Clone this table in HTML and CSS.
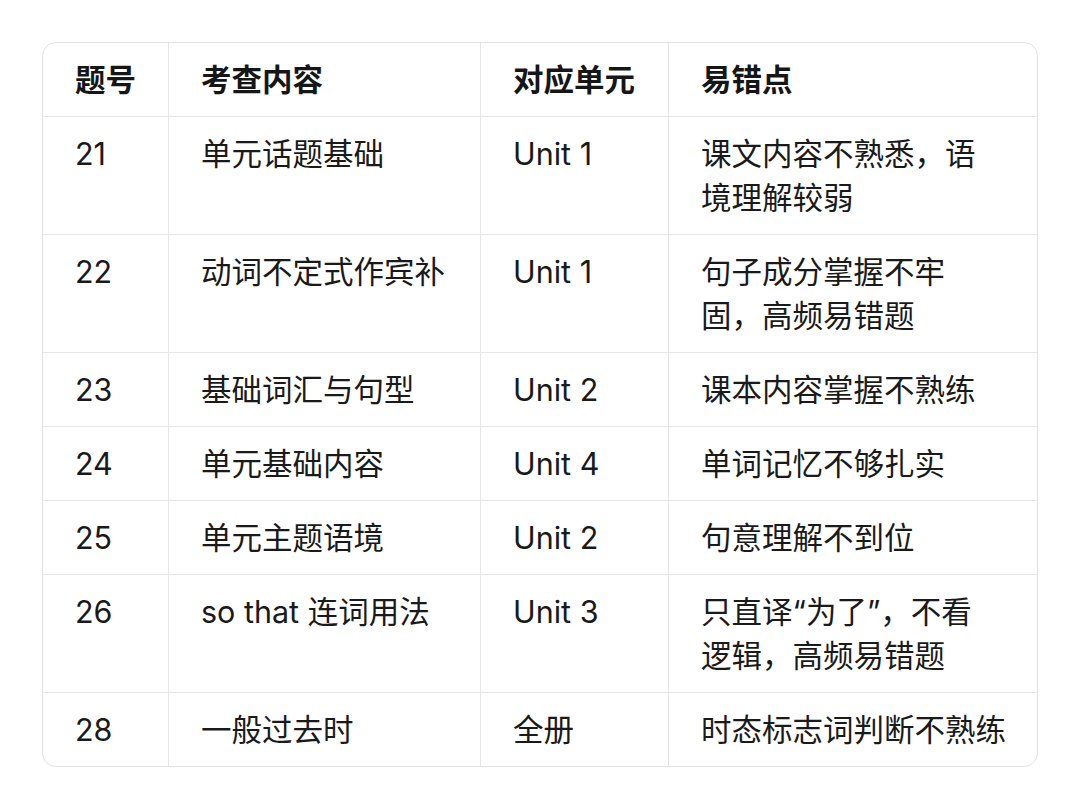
FILE: index.html
```html
<!DOCTYPE html>
<html lang="zh-CN">
<head>
<meta charset="utf-8">
<link rel="stylesheet" href="styles.css">
</head>
<body>
<div class="card">
<table class="grid">
<colgroup>
<col class="c1"><col class="c2"><col class="c3"><col class="c4">
</colgroup>
<thead>
<tr><th>题号</th><th>考查内容</th><th>对应单元</th><th>易错点</th></tr>
</thead>
<tbody>
<tr><td>21</td><td>单元话题基础</td><td>Unit 1</td><td>课文内容不熟悉，语<br>境理解较弱</td></tr>
<tr><td>22</td><td>动词不定式作宾补</td><td>Unit 1</td><td>句子成分掌握不牢<br>固，高频易错题</td></tr>
<tr><td>23</td><td>基础词汇与句型</td><td>Unit 2</td><td>课本内容掌握不熟练</td></tr>
<tr><td>24</td><td>单元基础内容</td><td>Unit 4</td><td>单词记忆不够扎实</td></tr>
<tr><td>25</td><td>单元主题语境</td><td>Unit 2</td><td>句意理解不到位</td></tr>
<tr><td>26</td><td>so that 连词用法</td><td>Unit 3</td><td>只直译“为了”，不看<br>逻辑，高频易错题</td></tr>
<tr><td>28</td><td>一般过去时</td><td>全册</td><td>时态标志词判断不熟练</td></tr>
</tbody>
</table>
</div>
</body>
</html>
```

FILE: styles.css
```css
html, body {
  margin: 0;
  padding: 0;
  background: #ffffff;
}
body {
  padding: 42px 0 0 42px;
  font-family: "Inter", "Noto Sans CJK SC", sans-serif;
  color: #1a1a1a;
}
.card {
  width: 994px;
  border: 1px solid #e3e3e3;
  border-radius: 14px;
  overflow: hidden;
}
.grid {
  width: 100%;
  border-collapse: separate;
  border-spacing: 0;
  table-layout: fixed;
}
.c1 { width: 125px; }
.c2 { width: 312px; }
.c3 { width: 188px; }
.c4 { width: 369px; }
.grid th,
.grid td {
  text-align: left;
  vertical-align: top;
  padding: 15px 6px 14px 32px;
  font-size: 30.5px;
  line-height: 44px;
  white-space: nowrap;
  border-bottom: 1px solid #e6e6e6;
  border-left: 1px solid #e6e6e6;
}
.grid th:first-child,
.grid td:first-child {
  border-left: none;
}
.grid tbody tr:last-child td {
  border-bottom: none;
}
.grid th {
  font-weight: 700;
  color: #161616;
}
.grid td {
  font-weight: 400;
}
```
